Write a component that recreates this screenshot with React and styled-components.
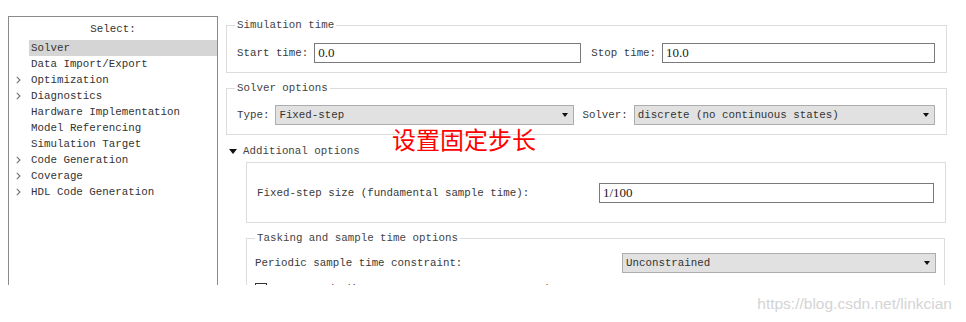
import React from 'react';
import styled, { createGlobalStyle } from 'styled-components';

const GlobalStyle = createGlobalStyle`
	html, body {
		margin: 0;
		padding: 0;
		background: #fff;
	}
`;

const Page = styled.div`
	width: 966px;
	height: 322px;
	position: relative;
	overflow: hidden;
	background: #fff;
	display: flex;
	flex-direction: column;
`;

const Window = styled.div`
	height: 285px;
	flex: none;
	overflow: hidden;
	display: flex;
	align-items: flex-start;
	font-family: "Liberation Mono", "DejaVu Sans Mono", monospace;
	font-size: 10.8px;
	color: #3a3a3a;
`;

const SideBar = styled.div`
	flex: none;
	margin: 16px 0 0 8px;
	width: 208px;
	height: 300px;
	border: 1px solid #8a8a8a;
	border-bottom: none;
`;

const SideTitle = styled.div`
	height: 23px;
	line-height: 25px;
	text-align: center;
	color: #333;
`;

const NavRow = styled.div`
	display: flex;
	height: 16px;
	align-items: center;
`;

const Chevron = styled.div`
	width: 20px;
	height: 16px;
	display: flex;
	align-items: center;
	justify-content: center;
	padding-right: 2px;
	box-sizing: border-box;
`;

const NavLabel = styled.div`
	flex: 1;
	height: 16px;
	line-height: 16px;
	padding-left: 2px;
	color: #333;
	background: ${(p) => (p.$active ? '#d5d5d5' : 'transparent')};
`;

const Main = styled.div`
	flex: none;
	width: 721px;
	margin: 18px 0 0 8px;
`;

const Group = styled.fieldset`
	margin: ${(p) => p.$mt || 0}px 0 0 ${(p) => p.$ml || 0}px;
	padding: ${(p) => p.$pad};
	border: 1px solid #dcdcdc;
	min-width: 0;
	box-sizing: border-box;
	width: ${(p) => p.$w}px;
`;

const Legend = styled.legend`
	padding: 0 2px;
	margin-left: ${(p) => p.$ml || 0}px;
	line-height: 14px;
	color: #444;
`;

const Row = styled.div`
	display: flex;
	align-items: center;
	height: 20px;
	justify-content: ${(p) => (p.$between ? 'space-between' : 'flex-start')};
`;

const Label = styled.span`
	white-space: pre;
	margin-left: ${(p) => p.$ml || 0}px;
	margin-right: ${(p) => p.$mr || 6}px;
	color: #3a3a3a;
`;

const Input = styled.div`
	width: ${(p) => p.$w}px;
	height: 20px;
	box-sizing: border-box;
	border: 1px solid #7a7a7a;
	background: #fff;
	padding-left: 3px;
	font-family: "Liberation Serif", serif;
	font-size: 13px;
	line-height: 18px;
	color: #1a1a1a;
`;

const Select = styled.div`
	width: ${(p) => p.$w}px;
	height: 20px;
	box-sizing: border-box;
	border: 1px solid #adadad;
	background: #e1e1e1;
	display: flex;
	align-items: center;
	justify-content: space-between;
	padding: 0 4px 0 3px;
	color: #333;
`;

const Caret = styled.span`
	flex: none;
	width: 0;
	height: 0;
	border-left: ${(p) => p.$w / 2}px solid transparent;
	border-right: ${(p) => p.$w / 2}px solid transparent;
	border-top: ${(p) => p.$h}px solid #111;
	margin-right: ${(p) => p.$mr || 0}px;
`;

const Disclosure = styled.div`
	display: flex;
	align-items: center;
	height: 16px;
	margin: 8px 0 0 3px;
	color: #444;
`;

const Panel = styled.div`
	width: 700px;
	box-sizing: border-box;
	margin: 3px 0 0 20px;
	padding: 20px 11px 19px 10px;
	border: 1px solid #dcdcdc;
`;

const CheckRow = styled.div`
	display: flex;
	align-items: center;
	margin-top: 9px;
	height: 14px;
`;

const CheckBox = styled.span`
	width: 12px;
	height: 12px;
	box-sizing: border-box;
	border: 1px solid #333;
	background: #fff;
	margin-right: 6px;
`;

const Annotation = styled.div`
	position: absolute;
	left: 392px;
	top: 123px;
	font-family: "Noto Sans CJK SC", sans-serif;
	font-size: 24px;
	line-height: 32px;
	color: #ff0000;
`;

const Footer = styled.div`
	flex: 1;
	display: flex;
	justify-content: flex-end;
	align-items: center;
	padding-right: 14px;
	font-family: "Liberation Sans", Arial, sans-serif;
	font-size: 15.5px;
	color: #d4d4d4;
`;

const navItems = [
	{ label: 'Solver', active: true },
	{ label: 'Data Import/Export' },
	{ label: 'Optimization', more: true },
	{ label: 'Diagnostics', more: true },
	{ label: 'Hardware Implementation' },
	{ label: 'Model Referencing' },
	{ label: 'Simulation Target' },
	{ label: 'Code Generation', more: true },
	{ label: 'Coverage', more: true },
	{ label: 'HDL Code Generation', more: true },
];

const ChevronIcon = () => (
	<svg width="5" height="8" viewBox="0 0 5 8">
		<polyline points="0.8,0.8 4,4 0.8,7.2" fill="none" stroke="#777" strokeWidth="1.2" />
	</svg>
);

const App = () => {
	return (
		<Page>
			<GlobalStyle />
			<Window>
				<SideBar>
					<SideTitle>Select:</SideTitle>
					{navItems.map((item) => (
						<NavRow key={item.label}>
							<Chevron>{item.more && <ChevronIcon />}</Chevron>
							<NavLabel $active={item.active}>{item.label}</NavLabel>
						</NavRow>
					))}
				</SideBar>
				<Main>
					<Group $w={721} $pad="11px 10px 9px 10px">
						<Legend $ml={-2}>Simulation time</Legend>
						<Row>
							<Label>Start time:</Label>
							<Input $w={267}>0.0</Input>
							<Label $ml={10}>Stop time:</Label>
							<Input $w={273}>10.0</Input>
						</Row>
					</Group>
					<Group $w={721} $mt={8} $pad="10px 10px 9px 10px">
						<Legend $ml={-2}>Solver options</Legend>
						<Row>
							<Label>Type:</Label>
							<Select $w={299}>
								Fixed-step
								<Caret $w={7} $h={4} $mr={1} />
							</Select>
							<Label $ml={8}>Solver:</Label>
							<Select $w={301}>
								discrete (no continuous states)
								<Caret $w={7} $h={4} $mr={1} />
							</Select>
						</Row>
					</Group>
					<Disclosure>
						<Caret $w={9} $h={5} $mr={6} />
						Additional options
					</Disclosure>
					<Panel>
						<Row $between>
							<Label>Fixed-step size (fundamental sample time):</Label>
							<Input $w={335}>1/100</Input>
						</Row>
					</Panel>
					<Group $w={699} $mt={8} $ml={20} $pad="8px 8px 0 8px">
						<Legend>Tasking and sample time options</Legend>
						<Row $between>
							<Label>Periodic sample time constraint:</Label>
							<Select $w={314}>
								Unconstrained
								<Caret $w={7} $h={4} $mr={1} />
							</Select>
						</Row>
						<CheckRow>
							<CheckBox />
							<Label>Treat each discrete rate as a separate task</Label>
						</CheckRow>
					</Group>
				</Main>
			</Window>
			<Annotation>设置固定步长</Annotation>
			<Footer>https://blog.csdn.net/linkcian</Footer>
		</Page>
	);
};

export default App;
